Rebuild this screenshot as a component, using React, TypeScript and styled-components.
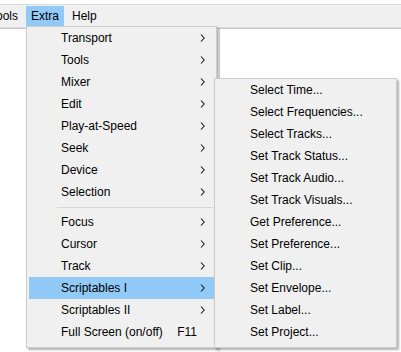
import styled, { createGlobalStyle } from "styled-components"

const GlobalStyle = createGlobalStyle`
    body {
        margin: 0;
        font-family: "Liberation Sans", Arial, sans-serif;
        font-size: 12px;
        color: #000;
        background: #fff;
    }
`

const Window = styled.div`
    position: relative;
    width: 401px;
    height: 352px;
    overflow: hidden;
    background: #fff;
    padding-top: 4px;
    box-sizing: border-box;
    display: flex;
    flex-direction: column;
`

const MenuBar = styled.div`
    display: flex;
    gap: 3px;
    height: 21px;
    padding-top: 1px;
    margin-left: -15px;
    background: #f0f0f0;
    border-top: 1px solid #dadada;
    border-bottom: 1px solid #dadada;
`

const BarItem = styled.div<{ $active?: boolean }>`
    padding: 0 5px;
    line-height: 21px;
    background: ${p => (p.$active ? "#91c9f7" : "transparent")};
`

const Workspace = styled.div`
    flex: 1;
    display: flex;
    border-top: 1px solid #c8c8c8;
`

const LeftPane = styled.div`
    width: 219px;
`

const Canvas = styled.div`
    flex: 1;
    border-left: 1px solid #e0e0e0;
`

const DropMenu = styled.div<{ $left: number; $top: number; $width: number }>`
    position: absolute;
    left: ${p => p.$left}px;
    top: ${p => p.$top}px;
    width: ${p => p.$width}px;
    box-sizing: border-box;
    padding: 0 2px 4px;
    background: #f0f0f0;
    border: 1px solid #cccccc;
    box-shadow: 2px 2px 2px rgba(0, 0, 0, 0.3);
`

const Item = styled.div<{ $active?: boolean; $indent: number }>`
    display: flex;
    align-items: center;
    height: 22px;
    padding: 0 9px 0 ${p => p.$indent}px;
    background: ${p => (p.$active ? "#91c9f7" : "transparent")};
    white-space: nowrap;
`

const Label = styled.span`
    flex: 1;
`

const Shortcut = styled.span`
    margin-left: 12px;
`

const Trail = styled.span`
    width: 8px;
    display: flex;
    justify-content: flex-end;
`

const Separator = styled.div`
    height: 1px;
    margin: 4px 1px 3px 28px;
    background: #d7d7d7;
`

const Chevron = () => (
    <svg width="5" height="8" viewBox="0 0 5 8">
        <path d="M1 0.5 L4.2 4 L1 7.5" fill="none" stroke="#1a1a1a" strokeWidth="1.1" />
    </svg>
)

const topItems = ["Transport", "Tools", "Mixer", "Edit", "Play-at-Speed", "Seek", "Device", "Selection"]
const lowerItems = ["Focus", "Cursor", "Track", "Scriptables I", "Scriptables II"]
const scriptables = [
    "Select Time...",
    "Select Frequencies...",
    "Select Tracks...",
    "Set Track Status...",
    "Set Track Audio...",
    "Set Track Visuals...",
    "Get Preference...",
    "Set Preference...",
    "Set Clip...",
    "Set Envelope...",
    "Set Label...",
    "Set Project...",
]

const App = () => {
    return (
        <Window>
            <GlobalStyle />
            <MenuBar>
                <BarItem>Tools</BarItem>
                <BarItem $active>Extra</BarItem>
                <BarItem>Help</BarItem>
            </MenuBar>
            <Workspace>
                <LeftPane />
                <Canvas />
            </Workspace>

            <DropMenu $left={26} $top={26} $width={191}>
                {topItems.map(name => (
                    <Item key={name} $indent={32}>
                        <Label>{name}</Label>
                        <Trail><Chevron /></Trail>
                    </Item>
                ))}
                <Separator />
                {lowerItems.map(name => (
                    <Item key={name} $indent={32} $active={name === "Scriptables I"}>
                        <Label>{name}</Label>
                        <Trail><Chevron /></Trail>
                    </Item>
                ))}
                <Item $indent={32}>
                    <Label>Full Screen (on/off)</Label>
                    <Shortcut>F11</Shortcut>
                    <Trail />
                </Item>
            </DropMenu>

            <DropMenu $left={214} $top={78} $width={183}>
                {scriptables.map(name => (
                    <Item key={name} $indent={33}>
                        <Label>{name}</Label>
                    </Item>
                ))}
            </DropMenu>
        </Window>
    )
}

export default App
